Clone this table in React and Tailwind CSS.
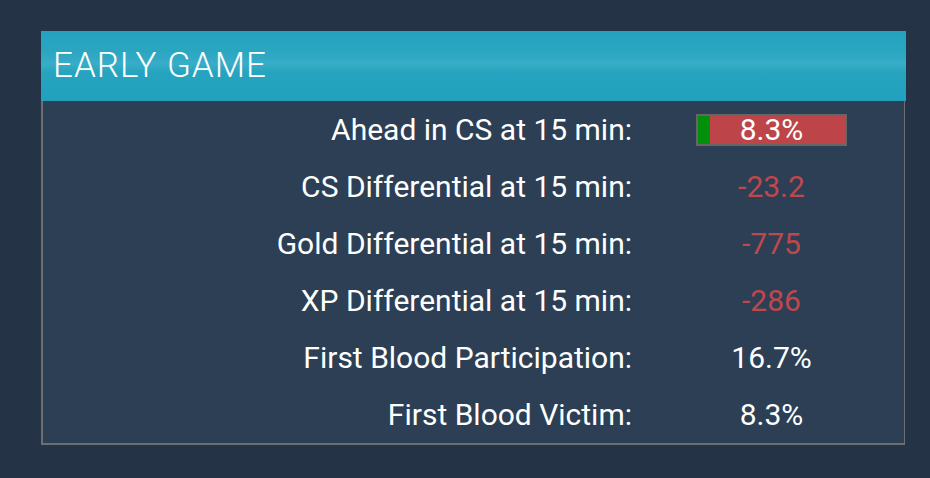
import React from 'react';

const rows = [
  { label: 'Ahead in CS at 15 min:', value: '8.3%', bar: 8.3 },
  { label: 'CS Differential at 15 min:', value: '-23.2', bad: true },
  { label: 'Gold Differential at 15 min:', value: '-775', bad: true },
  { label: 'XP Differential at 15 min:', value: '-286', bad: true },
  { label: 'First Blood Participation:', value: '16.7%' },
  { label: 'First Blood Victim:', value: '8.3%' },
];

const StatValue = ({ row }) => {
  if (row.bar !== undefined) {
    return (
      <div className="relative flex h-[32px] w-[151px] items-center justify-center border-2 border-[#666666] bg-[#bd4448]">
        <div className="absolute left-0 top-0 h-full bg-[#00900c]" style={{ width: `${row.bar}%` }} />
        <span className="relative leading-none">{row.value}</span>
      </div>
    );
  }
  return (
    <div className={`w-[151px] text-center leading-none ${row.bad ? 'text-[#c0474c]' : 'text-white'}`}>
      {row.value}
    </div>
  );
};

export default function App() {
  return (
    <div className="min-h-[478px] w-[930px] bg-[#243345] pt-[31px] pl-[41px] font-['Roboto',sans-serif]">
      <div className="w-[865px]">
        {/* Header */}
        <div className="flex h-[70px] items-center bg-[linear-gradient(to_bottom,#23a2bf_0%,#2ba6c1_30%,#39adc7_47%,#25a3bf_60%,#22a1be_100%)] pl-[12px]">
          <h2 className="text-[35px] font-light tracking-[1px] text-white">EARLY GAME</h2>
        </div>

        {/* Body */}
        <div className="mr-[1px] border-b-2 border-l-2 border-r border-[#6b6e72] bg-[#2c3f55]">
          {rows.map((row) => (
            <div key={row.label} className="flex h-[57px] items-center text-[30px] text-white">
              <div className="w-[589px] text-right leading-none">{row.label}</div>
              <div className="ml-[64px]">
                <StatValue row={row} />
              </div>
            </div>
          ))}
        </div>
      </div>
    </div>
  );
}
